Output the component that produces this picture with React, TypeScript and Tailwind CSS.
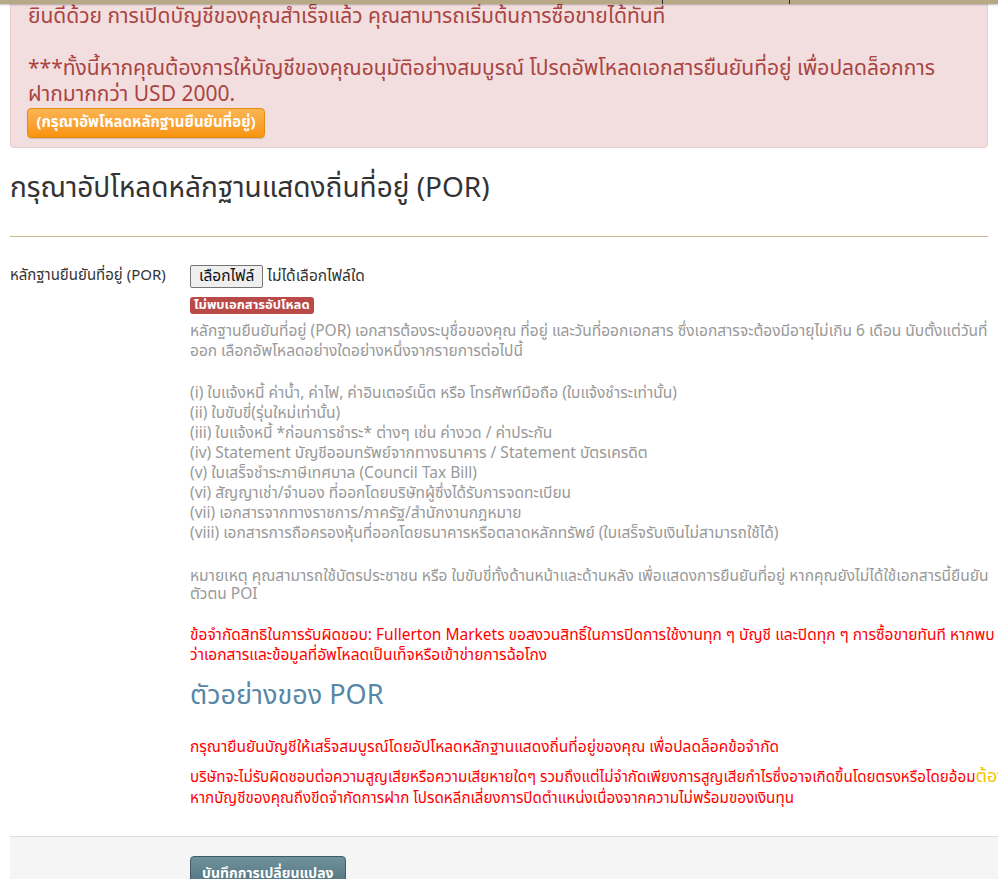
import React from 'react';

const proofList = [
    '(i) ใบแจ้งหนี้ ค่าน้ำ, ค่าไฟ, ค่าอินเตอร์เน็ต หรือ โทรศัพท์มือถือ (ใบแจ้งชำระเท่านั้น)',
    '(ii) ใบขับขี่(รุ่นใหม่เท่านั้น)',
    '(iii) ใบแจ้งหนี้ *ก่อนการชำระ* ต่างๆ เช่น ค่างวด / ค่าประกัน',
    '(iv) Statement บัญชีออมทรัพย์จากทางธนาคาร / Statement บัตรเครดิต',
    '(v) ใบเสร็จชำระภาษีเทศบาล (Council Tax Bill)',
    '(vi) สัญญาเช่า/จำนอง ที่ออกโดยบริษัทผู้ซึ่งได้รับการจดทะเบียน',
    '(vii) เอกสารจากทางราชการ/ภาครัฐ/สำนักงานกฎหมาย',
    '(viii) เอกสารการถือครองหุ้นที่ออกโดยธนาคารหรือตลาดหลักทรัพย์ (ใบเสร็จรับเงินไม่สามารถใช้ได้)',
];

const App: React.FC = () => {
    return (
        <div className="min-h-screen bg-white overflow-x-hidden font-['Tahoma','Noto_Sans_Thai','Noto_Sans',sans-serif] text-[#333]">

            {/* แถบเมนูด้านบน (ถูกเลื่อนออกไป) */}
            <div className="relative z-10 h-[4px] bg-[#b7a886] shadow-[0_1px_2px_rgba(0,0,0,0.25)] flex">
                <div className="w-[662px]"></div>
                <div className="w-[128px] border-l border-r border-[#2b2b2b]"></div>
            </div>

            {/* Alert */}
            <div className="mx-[10px] bg-[#f2dede] border border-t-0 border-[#ebccd1] rounded-b text-[#a94442] pl-[17px] pr-[16px] pb-[9px] text-[21px] leading-[26px]">
                <div>ยินดีด้วย การเปิดบัญชีของคุณสำเร็จแล้ว คุณสามารถเริ่มต้นการซื้อขายได้ทันที</div>
                <div>&nbsp;</div>
                <div>
                    ***ทั้งนี้หากคุณต้องการให้บัญชีของคุณอนุมัติอย่างสมบูรณ์ โปรดอัพโหลดเอกสารยืนยันที่อยู่ เพื่อปลดล็อกการ
                    <br />
                    ฝากมากกว่า USD 2000.
                </div>
                <button className="-ml-[1px] h-[30px] w-[238px] rounded border border-[#e38d13] bg-gradient-to-b from-[#fbb450] to-[#f89406] text-white text-[15px] leading-[28px] font-bold shadow-[0_1px_1px_rgba(0,0,0,0.15)]">
                    (กรุณาอัพโหลดหลักฐานยืนยันที่อยู่)
                </button>
            </div>

            {/* หัวข้อ */}
            <div className="mx-[10px]">
                <h1 className="pt-[23px] pb-[29px] text-[28px] leading-[36px] text-[#333]">กรุณาอัปโหลดหลักฐานแสดงถิ่นที่อยู่ (POR)</h1>
                <div className="border-t border-[#c9b68f]"></div>
            </div>

            {/* ฟอร์ม */}
            <div className="ml-[10px] mt-[28px] flex text-[15.5px]">
                <div className="w-[180px] shrink-0 leading-[20px] pt-[1px] text-[15px]">หลักฐานยืนยันที่อยู่ (POR)</div>
                <div className="flex-1 min-w-0">
                    <div className="flex items-center gap-[4px] h-[23px]">
                        <span className="h-[23px] px-[8px] border border-[#767676] rounded-[2px] bg-[#efefef] text-[#111] flex items-center">เลือกไฟล์</span>
                        <span className="text-[#333]">ไม่ได้เลือกไฟล์ใด</span>
                    </div>
                    <div className="mt-[9px] h-[17px] flex">
                        <span className="bg-[#b94a48] text-white text-[13px] font-bold leading-[17px] px-[4px] rounded-[3px]">ไม่พบเอกสารอัปโหลด</span>
                    </div>
                    <div className="mt-[8px] text-[#999] leading-[20px]">
                        <p className="pr-[10px]">หลักฐานยืนยันที่อยู่ (POR) เอกสารต้องระบุชื่อของคุณ ที่อยู่ และวันที่ออกเอกสาร ซึ่งเอกสารจะต้องมีอายุไม่เกิน 6 เดือน นับตั้งแต่วันที่ออก เลือกอัพโหลดอย่างใดอย่างหนึ่งจากรายการต่อไปนี้</p>
                        <div className="mt-[22px]">
                            {proofList.map((item) => (
                                <div key={item}>{item}</div>
                            ))}
                        </div>
                        <p className="mt-[24px] leading-[18px]">หมายเหตุ คุณสามารถใช้บัตรประชาชน หรือ ใบขับขี่ทั้งด้านหน้าและด้านหลัง เพื่อแสดงการยืนยันที่อยู่ หากคุณยังไม่ได้ใช้เอกสารนี้ยืนยัน ตัวตน POI</p>
                    </div>
                    <p className="mt-[22px] text-[#f00] leading-[20px]">ข้อจำกัดสิทธิในการรับผิดชอบ: Fullerton Markets ขอสงวนสิทธิ์ในการปิดการใช้งานทุก ๆ บัญชี และปิดทุก ๆ การซื้อขายทันที หากพบ ว่าเอกสารและข้อมูลที่อัพโหลดเป็นเท็จหรือเข้าข่ายการฉ้อโกง</p>
                    <h2 className="mt-[12px] text-[27px] leading-[36px] text-[#5787a6]">ตัวอย่างของ POR</h2>
                    <p className="mt-[24px] text-[#f00] leading-[20px]">กรุณายืนยันบัญชีให้เสร็จสมบูรณ์โดยอัปโหลดหลักฐานแสดงถิ่นที่อยู่ของคุณ เพื่อปลดล็อคข้อจำกัด</p>
                    <p className="mt-[8px] text-[#f00] text-[15.2px] leading-[21px] whitespace-nowrap">
                        บริษัทจะไม่รับผิดชอบต่อความสูญเสียหรือความเสียหายใดๆ รวมถึงแต่ไม่จำกัดเพียงการสูญเสียกำไรซึ่งอาจเกิดขึ้นโดยตรงหรือโดยอ้อม<span className="text-[#f5c400] text-[18px]">ต้องเป็นไปตามเงื่อนไข</span>
                        <br />
                        หากบัญชีของคุณถึงขีดจำกัดการฝาก โปรดหลีกเลี่ยงการปิดตำแหน่งเนื่องจากความไม่พร้อมของเงินทุน
                    </p>
                </div>
            </div>

            {/* ส่วนท้ายฟอร์ม */}
            <div className="ml-[10px] mt-[27px] border-t border-[#ddd] bg-[#f5f5f5] pt-[19px] pl-[180px] pb-[20px]">
                <button className="h-[34px] px-[11px] rounded-t-[4px] border border-[#3f5c66] bg-gradient-to-b from-[#6f939e] to-[#4e6e79] text-white text-[14px] font-bold">
                    บันทึกการเปลี่ยนแปลง
                </button>
            </div>
        </div>
    );
};

export default App;
